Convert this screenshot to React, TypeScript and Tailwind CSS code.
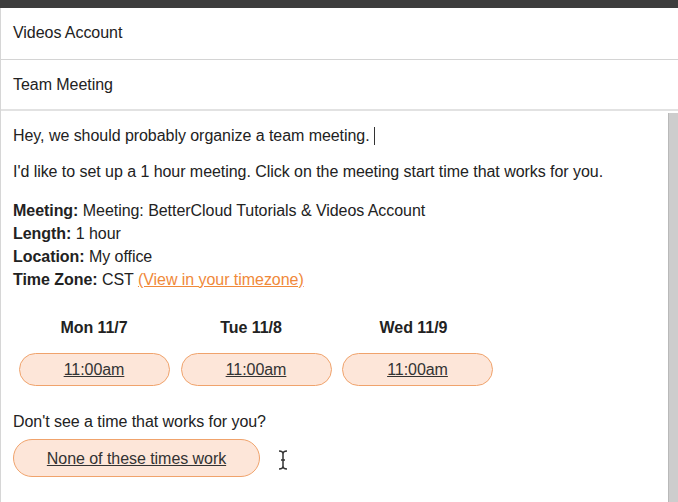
import React from "react";

export default function App() {
  const days = [
    { d: "Mon 11/7", pad: "pr-0" },
    { d: "Tue 11/8", pad: "pr-[10px]" },
    { d: "Wed 11/9", pad: "pr-[8px]" },
  ];
  return (
    <div
      className="w-[678px] h-[502px] overflow-hidden bg-white text-[#222] flex flex-col tracking-[-0.05px]"
      style={{ fontFamily: '"Liberation Sans", Arial, sans-serif' }}
    >
      <div className="h-[8px] bg-[#3d3d3d] shrink-0" />
      <div className="flex-1 flex flex-col border-l border-[#d6d6d6] min-h-0">
        <div className="h-[52px] shrink-0 flex items-center pl-[12px] pb-[1px] text-[16px] border-b border-[#d4d4d4]">
          Videos Account
        </div>
        <div className="h-[51px] shrink-0 flex items-center pl-[12px] text-[16px] border-b-2 border-[#e2e2e2]">
          Team Meeting
        </div>
        <div className="flex-1 flex min-h-0">
          <div className="flex-1 pl-[12px] pt-[13px] text-[16px] leading-[23px]">
            <div className="flex items-center">
              Hey, we should probably organize a team meeting.
              <span className="inline-block w-[1px] h-[18px] bg-[#333] ml-[4px]" />
            </div>
            <div className="mt-[13px]">
              I'd like to set up a 1 hour meeting. Click on the meeting start time that works for you.
            </div>
            <div className="mt-[16px]">
              <div>
                <b>Meeting:</b> Meeting: BetterCloud Tutorials &amp; Videos Account
              </div>
              <div>
                <b>Length:</b> 1 hour
              </div>
              <div>
                <b>Location:</b> My office
              </div>
              <div>
                <b>Time Zone:</b> CST{" "}
                <span className="text-[#f0893a] underline">(View in your timezone)</span>
              </div>
            </div>
            <div className="mt-[25px] grid grid-cols-[162px_162px_161px]">
              {days.map((x) => (
                <div key={x.d} className={"flex justify-center " + x.pad}>
                  <div className="font-bold h-[23px] leading-[23px]">{x.d}</div>
                </div>
              ))}
              {days.map((x) => (
                <div key={x.d + "b"} className="flex justify-center pt-[14px]">
                  <div className="w-[151px] h-[33px] rounded-[17px] border border-[#f0a36c] bg-[#fde6d9] flex items-center justify-center">
                    <span className="underline text-[#333]">11:00am</span>
                  </div>
                </div>
              ))}
            </div>
            <div className="mt-[24px]">Don't see a time that works for you?</div>
            <div className="mt-[6px] flex items-center">
              <div className="w-[247px] h-[38px] rounded-[19px] border border-[#f0a36c] bg-[#fde6d9] flex items-center justify-center">
                <span className="underline text-[#333]">None of these times work</span>
              </div>
              <svg width="10" height="22" viewBox="0 0 10 22" className="ml-[18px] mt-[4px]">
                <path
                  d="M1 2 Q5 2 5 5 L5 17 Q5 20 1 20 M9 2 Q5 2 5 5 M5 17 Q5 20 9 20 M3 11 L7 11"
                  stroke="#333"
                  strokeWidth="1.5"
                  fill="none"
                />
              </svg>
            </div>
          </div>
          <div className="w-[10px] mt-[2px] bg-[#cdcdcd] border-l border-[#b9b9b9] shrink-0" />
        </div>
      </div>
    </div>
  );
}
